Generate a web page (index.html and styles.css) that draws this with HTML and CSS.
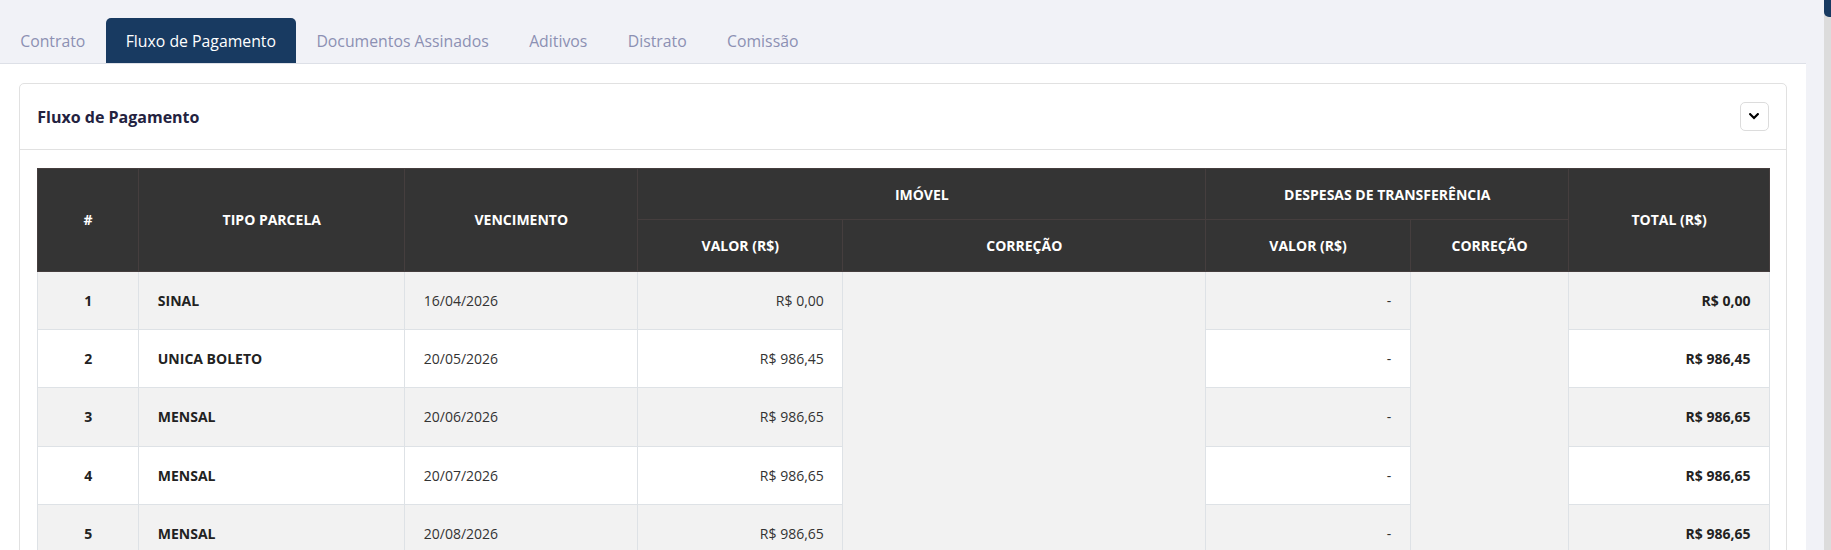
FILE: index.html
```html
<!DOCTYPE html>
<html lang="pt-BR">
<head>
<meta charset="utf-8">
<title>Fluxo de Pagamento</title>
<link rel="stylesheet" href="styles.css">
</head>
<body>
<div class="app">
  <main class="main">
    <nav class="tabs">
      <a class="tab">Contrato</a>
      <a class="tab active">Fluxo de Pagamento</a>
      <a class="tab">Documentos Assinados</a>
      <a class="tab">Aditivos</a>
      <a class="tab">Distrato</a>
      <a class="tab">Comissão</a>
    </nav>
    <section class="panel">
      <div class="card">
        <div class="card-header">
          <h2 class="card-title">Fluxo de Pagamento</h2>
          <button class="collapse-btn" type="button" aria-label="Recolher">
            <svg width="10" height="7" viewBox="0 0 10 7"><path d="M1.2 1.2 L5 5 L8.8 1.2" fill="none" stroke="#000" stroke-width="2.2" stroke-linecap="square"/></svg>
          </button>
        </div>
        <div class="card-body">
          <table class="flow">
            <colgroup>
              <col class="c-num"><col class="c-tipo"><col class="c-venc"><col class="c-val"><col class="c-corr"><col class="c-dval"><col class="c-dcorr"><col class="c-total">
            </colgroup>
            <thead>
              <tr>
                <th rowspan="2">#</th>
                <th rowspan="2">TIPO PARCELA</th>
                <th rowspan="2">VENCIMENTO</th>
                <th colspan="2">IMÓVEL</th>
                <th colspan="2">DESPESAS DE TRANSFERÊNCIA</th>
                <th rowspan="2">TOTAL (R$)</th>
              </tr>
              <tr>
                <th>VALOR (R$)</th>
                <th>CORREÇÃO</th>
                <th>VALOR (R$)</th>
                <th>CORREÇÃO</th>
              </tr>
            </thead>
            <tbody>
              <tr class="odd">
                <td class="num">1</td><td class="tipo">SINAL</td><td>16/04/2026</td><td class="right">R$ 0,00</td>
                <td class="merged" rowspan="5"></td>
                <td class="right">-</td>
                <td class="merged" rowspan="5"></td>
                <td class="right total">R$ 0,00</td>
              </tr>
              <tr>
                <td class="num">2</td><td class="tipo">UNICA BOLETO</td><td>20/05/2026</td><td class="right">R$ 986,45</td>
                <td class="right">-</td><td class="right total">R$ 986,45</td>
              </tr>
              <tr class="odd">
                <td class="num">3</td><td class="tipo">MENSAL</td><td>20/06/2026</td><td class="right">R$ 986,65</td>
                <td class="right">-</td><td class="right total">R$ 986,65</td>
              </tr>
              <tr>
                <td class="num">4</td><td class="tipo">MENSAL</td><td>20/07/2026</td><td class="right">R$ 986,65</td>
                <td class="right">-</td><td class="right total">R$ 986,65</td>
              </tr>
              <tr class="odd">
                <td class="num">5</td><td class="tipo">MENSAL</td><td>20/08/2026</td><td class="right">R$ 986,65</td>
                <td class="right">-</td><td class="right total">R$ 986,65</td>
              </tr>
            </tbody>
          </table>
        </div>
      </div>
    </section>
  </main>
  <div class="scrollbar"><div class="thumb"></div></div>
</div>
</body>
</html>
```
FILE: styles.css
```css
html, body {
  margin: 0;
  height: 100%;
  overflow: hidden;
}
body {
  background: #f1f2f7;
  font-family: "Open Sans", "Noto Sans", sans-serif;
  color: #333;
}
.app {
  display: flex;
  height: 100%;
}
.main {
  flex: 1;
  min-width: 0;
  padding-right: 18px;
}
.tabs {
  display: flex;
  padding-top: 18px;
}
.tab {
  height: 45px;
  padding: 0 20.2px;
  display: flex;
  align-items: center;
  font-size: 15.8px;
  color: #8c90b3;
  border-radius: 5px 5px 0 0;
  cursor: pointer;
}
.tab.active {
  background: #183a61;
  color: #fff;
}
.panel {
  background: #fff;
  border-top: 1px solid #dde0e7;
  padding: 19.3px 18.7px;
  min-height: 600px;
}
.card {
  border: 1px solid #e1e1e1;
  border-radius: 5px;
}
.card-header {
  height: 65px;
  padding: 0 17.6px;
  display: flex;
  align-items: center;
  justify-content: space-between;
  border-bottom: 1px solid #e1e1e1;
}
.card-title {
  margin: 0;
  font-size: 16px;
  font-weight: 700;
  color: #232240;
}
.collapse-btn {
  width: 28.7px;
  height: 28.7px;
  padding: 0;
  border: 1px solid #dcdcdc;
  border-radius: 5px;
  background: #fff;
  display: flex;
  align-items: center;
  justify-content: center;
}
.card-body {
  padding: 17.7px 17.3px;
}
.flow {
  width: 1732px;
  table-layout: fixed;
  border-collapse: collapse;
  font-size: 14px;
  line-height: 21px;
}
.c-num { width: 101.3px; }
.c-tipo { width: 266px; }
.c-venc { width: 233px; }
.c-val { width: 205px; }
.c-corr { width: 363px; }
.c-dval { width: 204.5px; }
.c-dcorr { width: 158.5px; }
.c-total { width: 200.7px; }
.flow th {
  background: #343434;
  color: #fff;
  font-weight: 700;
  text-align: center;
  padding: 14.7px 10px;
  border: 1px solid #453e3e;
}
.flow td {
  padding: 18.15px 18.5px;
  border: 1px solid #dee2e6;
  background: #fff;
  color: #333;
  white-space: nowrap;
}
.flow tr.odd td,
.flow td.merged {
  background: #f2f2f2;
}
.flow td.num {
  text-align: center;
  font-weight: 700;
  color: #222;
}
.flow td.tipo {
  font-weight: 700;
  color: #222;
}
.flow td.right {
  text-align: right;
}
.flow td.total {
  font-weight: 700;
  color: #222;
}
.scrollbar {
  width: 7px;
  flex: none;
  background: #dcdcdc;
}
.thumb {
  height: 16.7px;
  background: #183a61;
  border-radius: 0 0 0 5px;
}
```
